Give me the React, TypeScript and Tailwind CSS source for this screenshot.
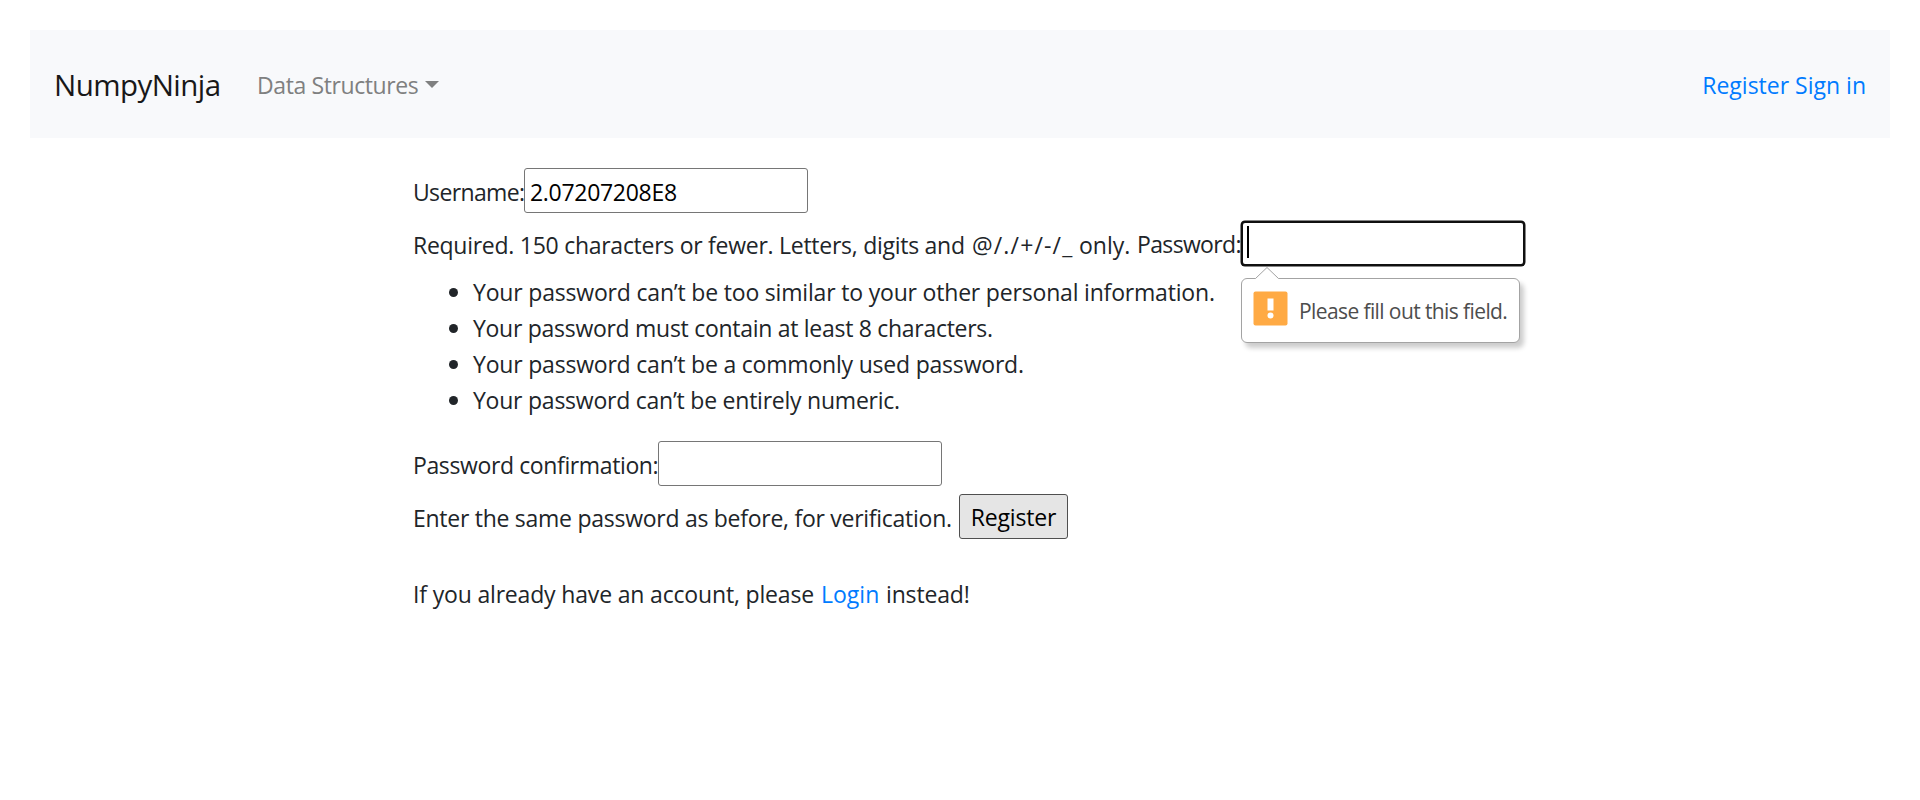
const rules = [
  { text: "Your password can’t be too similar to your other personal information.", tracking: "tracking-[-0.185px]" },
  { text: "Your password must contain at least 8 characters.", tracking: "tracking-[-0.285px]" },
  { text: "Your password can’t be a commonly used password.", tracking: "tracking-[-0.2px]" },
  { text: "Your password can’t be entirely numeric.", tracking: "tracking-[-0.235px]" },
];

const field = "h-[45px] w-[284px] rounded-[3px] border border-[#767676] bg-white px-[5px] pt-0.5 text-[23px] leading-[41px] text-black outline-none";

function Navbar() {
  return (
    <nav className="flex h-[108px] items-center bg-[#f8f9fb] pr-6 pl-6">
      <a className="w-[203px] text-[29.5px] leading-[45px] tracking-[-0.55px] text-[#181818]">NumpyNinja</a>
      <a className="flex items-center text-[#7f8080]">
        <span className="w-[168px] pt-0.5 tracking-[-0.4px]">Data Structures</span>
        <svg className="mt-px h-[7px] w-[14px]" viewBox="0 0 14 7" fill="currentColor">
          <path d="M0 0h14L7 7z" />
        </svg>
      </a>
      <div className="ml-auto flex pt-0.5 text-[#007bff]">
        <a>Register Sign in</a>
      </div>
    </nav>
  );
}

function ValidationBubble() {
  return (
    <div className="absolute top-[46px] left-0 z-10 w-[279px] pt-[11px]">
      <div className="flex h-[65px] items-start rounded-[6px] border border-[#a3a3a3] bg-white pt-3 pl-[11px] text-[#4d4d4d] shadow-[4px_5px_5px_rgba(0,0,0,0.2)]">
        <svg className="h-[35px] w-[35px] shrink-0" viewBox="0 0 35 35">
          <rect x="0.5" y="0.5" width="34" height="34" rx="2" fill="#ffaa44" />
          <path d="M14.5 7.5h6v12h-6z" fill="#fff" />
          <circle cx="17.5" cy="24.5" r="3" fill="#fff" />
        </svg>
        <span className="mt-[3px] ml-[11px] text-[21px] leading-[34px] tracking-[-0.6px]">Please fill out this field.</span>
      </div>
      <svg className="absolute top-0 left-[14px] h-[13px] w-6" viewBox="0 0 24 13">
        <path d="M0.5 13V11.5L12 0.5L23.5 11.5V13z" fill="#fff" />
        <path d="M0.5 11.5L12 0.5L23.5 11.5" fill="none" stroke="#a3a3a3" />
      </svg>
    </div>
  );
}

export default function App() {
  return (
    <div className="h-[800px] overflow-hidden bg-white p-[30px] font-['Open_Sans','Noto_Sans',sans-serif] text-[23px] leading-9 whitespace-nowrap text-[#212529]">
      <Navbar />
      <main className="ml-[382px] pt-[30px]">
        <form>
          <div className="flex h-[53px]">
            <label className="mt-[6px] w-[112px] pl-px tracking-[-0.65px]">Username:</label>
            <input className={field + " tracking-[-0.3px]"} defaultValue="2.07207208E8" />
          </div>
          <div className="flex h-[53px]">
            <span className="mt-[6px] flex">
              <span className="w-[560px] pl-px tracking-[-0.27px]">Required. 150 characters or fewer. Letters, digits and</span>
              <span className="w-[107px] tracking-[1.15px]">@/./+/-/_</span>
              <span className="w-[57px]">only.</span>
            </span>
            <label className="mt-[5px] w-[105px] pl-px tracking-[-0.65px]">Password:</label>
            <div className="relative">
              <div className="flex h-[45px] w-[284px] items-center rounded-[4px] border-2 border-[#101010] bg-white pl-1 shadow-[0_0_0_0.5px_#101010]">
                <span className="mb-1 h-8 w-[2px] bg-black" />
              </div>
              <ValidationBubble />
            </div>
          </div>
          <ul className="flex h-[167px] flex-col">
            {rules.map((rule) => (
              <li key={rule.text} className={"flex h-9 items-center " + rule.tracking}>
                <span className="mr-[15px] ml-[37px] h-[9px] w-[9px] rounded-full bg-[#212529]" />
                {rule.text}
              </li>
            ))}
          </ul>
          <div className="flex h-[53px]">
            <label className="mt-[6px] w-[246px] pl-px tracking-[-0.38px]">Password confirmation:</label>
            <input className={field} />
          </div>
          <div className="flex h-[76px]">
            <span className="mt-[6px] w-[547px] pl-px tracking-[-0.27px]">Enter the same password as before, for verification.</span>
            <button type="button" className="h-[45px] w-[109px] rounded-[3px] border border-[#4f4f4f] bg-[#e5e5e5] pt-px leading-[42px] tracking-[-0.15px] text-black">Register</button>
          </div>
        </form>
        <p className="mt-[6px] flex">
          <span className="w-[409px] pl-px tracking-[-0.17px]">If you already have an account, please</span>
          <a className="w-[65px] text-[#007bff]">Login</a>
          <span className="tracking-[-0.15px]">instead!</span>
        </p>
      </main>
    </div>
  );
}
